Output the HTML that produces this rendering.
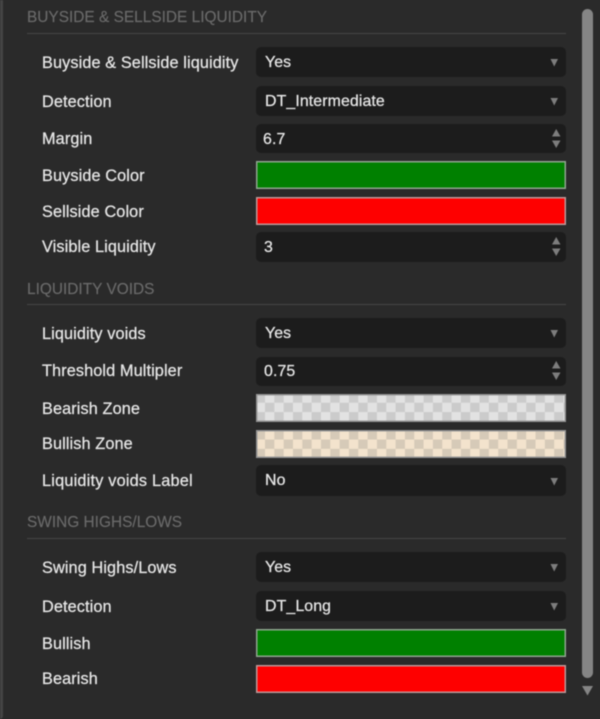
<!DOCTYPE html>
<html><head><meta charset="utf-8">
<style>
html,body{margin:0;padding:0;background:#2a2a2a}
#p{position:relative;width:600px;height:719px;overflow:hidden;background:#2a2a2a;font-family:"Liberation Sans",sans-serif;filter:blur(.4px)}
#edge{position:absolute;left:0;top:0;width:3px;height:719px;background:#444;border-bottom-right-radius:3px}
.h{position:absolute;left:27px;margin-top:1px;font-size:15.4px;line-height:18px;color:#6a6a6a;white-space:nowrap;letter-spacing:.02px;-webkit-text-stroke:.15px #6a6a6a}
.r{position:absolute;left:27px;width:539px;height:1px;background:#464646}
.l{position:absolute;left:42px;margin-top:1px;font-size:16.3px;line-height:20px;color:#e6e6e6;white-space:nowrap;letter-spacing:.1px;-webkit-text-stroke:.25px #e6e6e6}
.b{position:absolute;left:256px;width:310px;background:#1c1c1c;border-radius:5px}
.t{position:absolute;left:265px;margin-top:1px;font-size:15.9px;line-height:20px;color:#e6e6e6;white-space:nowrap;letter-spacing:.1px;-webkit-text-stroke:.25px #e6e6e6}
.s{position:absolute;left:256px;width:310px;height:28px;box-shadow:inset 0 0 0 1.5px var(--e)}
.g{background:#008000;--e:#8fa68f}
.d{background:#fe0000;--e:#c09898}
.c1,.c2{--e:#959595;background-size:18.66px 18.66px}
.c1{background-color:#e2e2e2;background-position:9px -.6px;background-image:conic-gradient(#cbcbcb 25%,transparent 0 50%,#cbcbcb 0 75%,transparent 0)}
.c2{background-color:#f3e3cd;background-position:9px .2px;background-image:conic-gradient(#d6cab8 25%,transparent 0 50%,#d6cab8 0 75%,transparent 0)}
svg{position:absolute;overflow:visible}
</style></head><body>
<div id="p">
<div id="edge"></div>

<div class="h" style="top:8px">BUYSIDE &amp; SELLSIDE LIQUIDITY</div>
<div class="r" style="top:33px"></div>

<div class="l" style="top:52px">Buyside &amp; Sellside liquidity</div>
<div class="b" style="top:47px;height:30px"></div>
<div class="t" style="top:52px">Yes</div>
<svg style="left:550px;top:58px" width="9" height="9"><path d="M0.5 1H8L4.2 8.5Z" fill="#7d7d7d"/></svg>

<div class="l" style="top:91px">Detection</div>
<div class="b" style="top:85.5px;height:30.5px"></div>
<div class="t" style="top:91px">DT_Intermediate</div>
<svg style="left:550px;top:97px" width="9" height="9"><path d="M0.5 1H8L4.2 8.5Z" fill="#7d7d7d"/></svg>

<div class="l" style="top:128px">Margin</div>
<div class="b" style="top:124px;height:29px"></div>
<div class="t" style="top:129px;left:263px">6.7</div>
<svg style="left:552px;top:129px" width="9" height="20"><path d="M0 7.5L4.2 0L8.5 7.5Z M0 11.5H8.5L4.2 19Z" fill="#7d7d7d"/></svg>

<div class="l" style="top:165px">Buyside Color</div>
<div class="s g" style="top:161px"></div>
<div class="l" style="top:201px">Sellside Color</div>
<div class="s d" style="top:197px"></div>

<div class="l" style="top:236px">Visible Liquidity</div>
<div class="b" style="top:232px;height:30px"></div>
<div class="t" style="top:237px;left:264px">3</div>
<svg style="left:552px;top:237px" width="9" height="20"><path d="M0 7.5L4.2 0L8.5 7.5Z M0 11.5H8.5L4.2 19Z" fill="#7d7d7d"/></svg>

<div class="h" style="top:280px">LIQUIDITY VOIDS</div>
<div class="r" style="top:304px"></div>

<div class="l" style="top:323px">Liquidity voids</div>
<div class="b" style="top:318px;height:30px"></div>
<div class="t" style="top:323px">Yes</div>
<svg style="left:550px;top:329px" width="9" height="9"><path d="M0.5 1H8L4.2 8.5Z" fill="#7d7d7d"/></svg>

<div class="l" style="top:360px">Threshold Multipler</div>
<div class="b" style="top:357px;height:28.5px"></div>
<div class="t" style="top:361px;left:264px">0.75</div>
<svg style="left:552px;top:361px" width="9" height="20"><path d="M0 7.5L4.2 0L8.5 7.5Z M0 11.5H8.5L4.2 19Z" fill="#7d7d7d"/></svg>

<div class="l" style="top:398px">Bearish Zone</div>
<div class="s c1" style="top:394px"></div>
<div class="l" style="top:433px;">Bullish Zone</div>
<div class="s c2" style="top:429.5px"></div>

<div class="l" style="top:470px;letter-spacing:.2px">Liquidity voids Label</div>
<div class="b" style="top:465px;height:31px"></div>
<div class="t" style="top:470px">No</div>
<svg style="left:550px;top:477px" width="9" height="9"><path d="M0.5 1H8L4.2 8.5Z" fill="#7d7d7d"/></svg>

<div class="h" style="top:513px">SWING HIGHS/LOWS</div>
<div class="r" style="top:538px"></div>

<div class="l" style="top:557px">Swing Highs/Lows</div>
<div class="b" style="top:552px;height:30px"></div>
<div class="t" style="top:557px">Yes</div>
<svg style="left:550px;top:563px" width="9" height="9"><path d="M0.5 1H8L4.2 8.5Z" fill="#7d7d7d"/></svg>

<div class="l" style="top:596px">Detection</div>
<div class="b" style="top:590.5px;height:30.5px"></div>
<div class="t" style="top:596px">DT_Long</div>
<svg style="left:550px;top:602px" width="9" height="9"><path d="M0.5 1H8L4.2 8.5Z" fill="#7d7d7d"/></svg>

<div class="l" style="top:633px">Bullish</div>
<div class="s g" style="top:629px"></div>
<div class="l" style="top:668px">Bearish</div>
<div class="s d" style="top:664.5px"></div>

<div style="position:absolute;left:582px;top:9px;width:11px;height:669px;background:#858585;border-radius:5.5px"></div>
<svg style="left:582px;top:686px" width="11" height="10"><path d="M0 0H11L5.5 9.5Z" fill="#858585"/></svg>
</div>
</body></html>
